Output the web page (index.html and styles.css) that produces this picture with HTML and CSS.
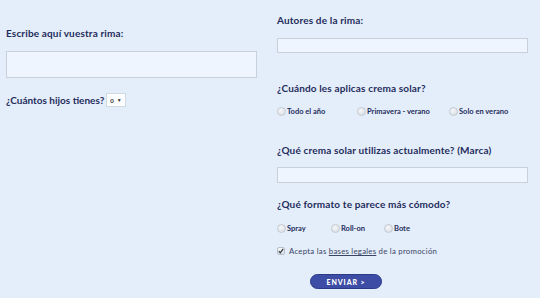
FILE: index.html
```html
<!DOCTYPE html>
<html lang="es">
<head>
  <meta charset="UTF-8">
  <meta name="viewport" content="width=device-width, initial-scale=1.0">
  <title>Concurso de rimas</title>
  <link rel="stylesheet" href="styles.css">
</head>
<body>

  <form class="form">
    <!-- columna izquierda -->
    <div class="col col-left">
      <label class="label label-rima">Escribe aquí vuestra rima:</label>
      <textarea class="field textarea"></textarea>
      <div class="row-select">
        <label class="label">¿Cuántos hijos tienes?</label>
        <span class="select">0 <span class="arrow">▼</span></span>
      </div>
    </div>

    <!-- columna derecha -->
    <div class="col col-right">
      <label class="label label-autores">Autores de la rima:</label>
      <input class="field input" type="text">

      <label class="label label-cuando">¿Cuándo les aplicas crema solar?</label>
      <div class="options options-when">
        <span class="option"><span class="radio"></span>Todo el año</span>
        <span class="option"><span class="radio"></span>Primavera - verano</span>
        <span class="option"><span class="radio"></span>Solo en verano</span>
      </div>

      <label class="label label-marca">¿Qué crema solar utilizas actualmente? (Marca)</label>
      <input class="field input input-marca" type="text">

      <label class="label label-formato">¿Qué formato te parece más cómodo?</label>
      <div class="options options-format">
        <span class="option"><span class="radio"></span>Spray</span>
        <span class="option"><span class="radio"></span>Roll-on</span>
        <span class="option"><span class="radio"></span>Bote</span>
      </div>

      <div class="legal">
        <span class="check">
          <svg width="6" height="6" viewBox="0 0 6 6"><path d="M0.8 3.2 L2.3 4.8 L5.2 0.8" fill="none" stroke="#2b3340" stroke-width="1.2"/></svg>
        </span>
        <span class="legal-text">Acepta las <a href="#" class="link">bases legales</a> de la promoción</span>
      </div>

      <button class="send" type="button">ENVIAR &gt;</button>
    </div>
  </form>

</body>
</html>
```

FILE: styles.css
```css
* {
  box-sizing: border-box;
  margin: 0;
  padding: 0;
}

body {
  background-color: #e4eefa;
  font-family: Lato, "Open Sans", sans-serif;
  color: #1f2c5c;
  height: 298px;
  overflow: hidden;
}

.form {
  display: grid;
  grid-template-columns: 251px 251px;
  column-gap: 20px;
  padding-left: 6px;
  align-items: start;
}

.col {
  display: flex;
  flex-direction: column;
  align-items: flex-start;
}

.label {
  display: block;
  font-size: 10px;
  font-weight: 700;
  line-height: 12px;
  letter-spacing: 0.15px;
  color: #1f2c5c;
  white-space: nowrap;
}

/* left column */
.label-rima {
  margin-top: 27px;
}

.field {
  display: block;
  width: 251px;
  background-color: #eef5fe;
  border: 1px solid #c9d0d9;
  outline: none;
  resize: none;
}

.textarea {
  height: 27px;
  margin-top: 12px;
}

.row-select {
  display: flex;
  align-items: center;
  gap: 2px;
  margin-top: 15px;
  height: 14px;
}

.row-select .label {
  letter-spacing: 0;
}

.select {
  display: inline-flex;
  align-items: center;
  gap: 3px;
  height: 14px;
  width: 20px;
  padding-left: 3px;
  background-color: #fbfdff;
  border: 1px solid #d3d9e1;
  font-size: 6px;
  font-weight: 700;
  color: #333;
}

.arrow {
  font-size: 5px;
}

/* right column */
.label-autores {
  margin-top: 14px;
}

.input {
  height: 15px;
  margin-top: 12px;
}

.label-cuando {
  margin-top: 29px;
}

.options {
  display: grid;
  margin-top: 11px;
  height: 12px;
  align-items: center;
}

.options-when {
  grid-template-columns: 80px 92px auto;
}

.options-format {
  grid-template-columns: 54px 53px auto;
  margin-top: 12px;
}

.option {
  display: flex;
  align-items: center;
  gap: 1px;
  font-size: 7.5px;
  font-weight: 700;
  color: #1f2c5c;
}

.radio {
  width: 9px;
  height: 9px;
  border-radius: 50%;
  border: 1px solid #c4c9d0;
  background: radial-gradient(circle at 40% 35%, #f4f6f9, #d6dbe2);
}

.label-marca {
  margin-top: 27px;
}

.input-marca {
  height: 16px;
  margin-top: 11px;
}

.label-formato {
  margin-top: 15px;
}

.legal {
  display: flex;
  align-items: center;
  gap: 4px;
  margin-top: 11px;
  height: 12px;
}

.legal-text {
  font-size: 7.8px;
  letter-spacing: 0.25px;
  color: #3a4566;
  white-space: nowrap;
}

.check {
  display: inline-flex;
  align-items: center;
  justify-content: center;
  width: 8px;
  height: 8px;
  border: 1px solid #b9bfc8;
  border-radius: 2px;
  background: linear-gradient(#f6f7f9, #dde1e6);
}

.link {
  color: #3a4566;
  text-decoration: underline;
}

.send {
  margin-top: 17px;
  margin-left: 33px;
  width: 72px;
  height: 15px;
  border-radius: 8px;
  border: 1px solid #2c3a8a;
  background-color: #3d4ca5;
  color: #ffffff;
  font-family: Lato, sans-serif;
  font-size: 7px;
  font-weight: 900;
  letter-spacing: 0.9px;
  cursor: pointer;
}
```
